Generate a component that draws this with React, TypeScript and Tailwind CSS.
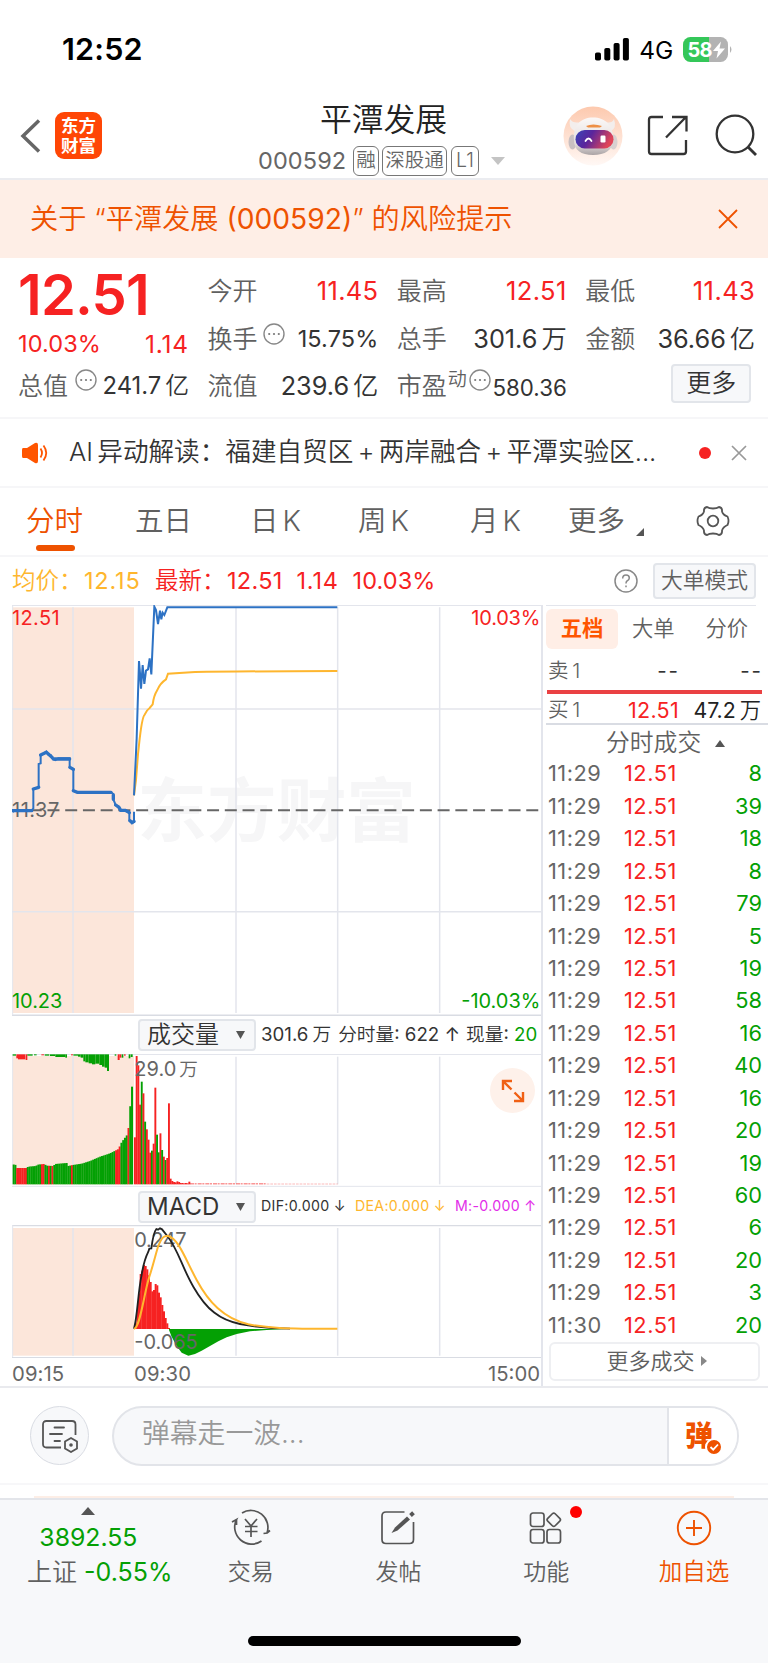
import type { ReactNode } from "react";
import clsx from "clsx";

type Bar = { x: number; y: number; color: string };

const RED = "#f62222";
const GREEN = "#04a004";
const GRID = "#e3e5ec";

const trades: [string, string, number][] = [
  ["11:29", "12.51", 8],
  ["11:29", "12.51", 39],
  ["11:29", "12.51", 18],
  ["11:29", "12.51", 8],
  ["11:29", "12.51", 79],
  ["11:29", "12.51", 5],
  ["11:29", "12.51", 19],
  ["11:29", "12.51", 58],
  ["11:29", "12.51", 16],
  ["11:29", "12.51", 40],
  ["11:29", "12.51", 16],
  ["11:29", "12.51", 20],
  ["11:29", "12.51", 19],
  ["11:29", "12.51", 60],
  ["11:29", "12.51", 6],
  ["11:29", "12.51", 20],
  ["11:29", "12.51", 3],
  ["11:30", "12.51", 20],
];

// linear interpolation over a list of [x, y] stops
function sample(stops: number[][], x: number) {
  for (let i = 1; i < stops.length; i++) {
    const [x0, y0] = stops[i - 1];
    const [x1, y1] = stops[i];
    if (x <= x1) return y0 + ((y1 - y0) * (x - x0)) / (x1 - x0);
  }
  return stops[stops.length - 1][1];
}

// pre-market matched volume, sampled every 5.3 units
const matchedStops = [
  [38, 493], [48, 495], [50, 504], [80, 504], [84, 500], [108, 498], [112, 494], [132, 492],
  [140, 497], [160, 498], [165, 492], [200, 489], [204, 498], [218, 495], [245, 491], [270, 483],
  [300, 470], [330, 460], [355, 447], [365, 426], [380, 406], [384, 388], [389, 370], [392, 260], [400, 260],
];
const matchedReds = [[49, 80], [124, 131], [146, 150], [155, 160], [213, 218], [347, 363], [382, 386]];
const matched: Bar[] = Array.from({ length: 68 }, (_, i) => {
  const x = 38 + i * 5.3;
  const mid = x + 2.6;
  const red = matchedReds.some(([a, b]) => mid >= a && mid <= b);
  return { x, y: sample(matchedStops, mid), color: red ? RED : GREEN };
});

const unmatched: [number, number, number, string][] = [
  [38, 10, 4, GREEN], [49, 5, 12, RED], [54, 22, 15, RED], [77, 5, 17, RED], [82, 16, 4, GREEN],
  [102, 8, 3, GREEN], [124, 8, 3, RED], [134, 14, 4, GREEN], [150, 16, 5, GREEN], [166, 30, 8, GREEN],
  [196, 5, 10, GREEN], [213, 6, 3, RED], [220, 14, 4, GREEN], [234, 8, 7, GREEN], [242, 8, 10, GREEN],
  [250, 6, 21, GREEN], [256, 10, 24, GREEN], [266, 10, 27, GREEN], [276, 10, 30, GREEN], [286, 12, 28, GREEN],
  [298, 8, 32, GREEN], [306, 8, 37, GREEN], [314, 7, 40, GREEN], [321, 6, 50, GREEN],
  [344, 5, 4, GREEN], [353, 6, 17, RED], [359, 5, 10, RED], [365, 5, 10, GREEN], [372, 5, 4, RED],
  [386, 5, 12, GREEN], [392, 6, 8, GREEN],
];

const minuteVolume: [number, string][] = [
  [412, RED], [168, RED], [196, RED], [314, RED], [245, GREEN], [280, RED], [365, GREEN], [388, RED],
  [419, RED], [458, RED], [452, GREEN], [431, RED], [263, RED], [404, GREEN], [457, GREEN], [400, RED],
  [450, GREEN], [470, RED], [480, GREEN], [474, RED], [310, RED], [536, RED], [543, RED], [546, RED],
  [547, RED], [544, RED], [546, RED], [549, RED], [549, RED], [550, RED], [549, RED], [550, RED], [545, RED],
];

const macdUp = [
  [404, 970], [409, 930], [414, 880], [419, 822], [424, 812], [429, 795], [434, 798], [439, 808], [444, 826],
  [449, 846], [454, 874], [459, 870], [464, 852], [469, 856], [474, 878], [479, 892], [484, 915], [489, 934],
  [494, 954], [499, 970], [504, 984],
];
const macdDown = [
  [507, 990], [515, 1010], [530, 1038], [545, 1058], [565, 1067], [585, 1062], [605, 1052], [630, 1038],
  [655, 1024], [680, 1012], [710, 1002], [750, 994], [800, 990], [860, 987],
];

const pricePath =
  "M402 946 L410 775 L417 543 L420 580 L423 626 L428 555 L433 612 L438 572 L444 568 L449 535 L454 583 L463 380 L468 390 L474 432 L480 392 L484 418 L488 398 L493 405 L502 382 L1012 382";
const avgPath =
  "M402 946 L408 900 L414 822 C420 770 424 712 434 704 Q440 690 449 684 L458 673 C461 650 463 644 472 630 Q480 610 498 598 L504 581 L585 576 Q700 574 1012 573";
const preMarketPath =
  "M38 996 L45 991 H95 L100 985 V927 L116 922 V852 L122 850 V825 L132 820 L139 815 L146 825 H152 L156 835 L166 840 L175 835 H209 V862 L220 867 V932 L232 937 H333 L340 942 V958 L347 975 L357 980 L360 990 H375 L388 998 V1022 L396 1028 L402 1026 V995";

function Label({ children, className }: { children: ReactNode; className?: string }) {
  return <span className={clsx("text-[25px] font-[350] text-[#606060]", className)}>{children}</span>;
}

function Amount({ value, unit, className }: { value: string; unit: string; className?: string }) {
  return (
    <span className={clsx("whitespace-nowrap", className)}>
      {value}
      <span className="ml-[4px] font-[350]">{unit}</span>
    </span>
  );
}

function MoreDots({ className }: { className?: string }) {
  return (
    <svg className={clsx("h-[22px] w-[22px] shrink-0", className)} viewBox="0 0 22 22">
      <circle cx="11" cy="11" r="10" fill="none" stroke="#888" strokeWidth="1.4" />
      <circle cx="6.2" cy="11" r="1.1" fill="#777" />
      <circle cx="11" cy="11" r="1.1" fill="#777" />
      <circle cx="15.8" cy="11" r="1.1" fill="#777" />
    </svg>
  );
}

function StatusBar() {
  return (
    <div className="flex h-[100px] items-center pl-[62px] pr-[35px]">
      <span className="pb-[2px] text-[30.500px] font-semibold tracking-[0.2px] text-black">12:52</span>
      <svg className="ml-auto h-[24px] w-[35px]" viewBox="0 0 35 24">
        <rect x="0" y="14.500" width="6" height="8" rx="1.8" />
        <rect x="9.3" y="10" width="6" height="12.500" rx="1.8" />
        <rect x="18.600" y="5" width="6" height="17.500" rx="1.8" />
        <rect x="27.900" y="0" width="6" height="22.500" rx="1.8" />
      </svg>
      <span className="ml-[9px] text-[24.500px] tracking-[-0.2px] text-black">4G</span>
      <svg className="ml-[10px] h-[26px] w-[50px]" viewBox="0 0 50 26">
        <defs>
          <clipPath id="battery">
            <rect width="45" height="25" rx="7.500" />
          </clipPath>
        </defs>
        <g clipPath="url(#battery)">
          <rect width="26" height="25" fill="#34c759" />
          <rect x="26" width="20" height="25" fill="#b3b3b3" />
        </g>
        <path d="M47 9 q3 3.500 0 7z" fill="#b3b3b3" />
        <text x="4.500" y="19.500" fontSize="20" fontWeight="700" fill="#fff" textLength="25">58</text>
        <path d="M38 4.500 L30 14 H35 L33.500 21.500 L42 11.500 H36.500z" fill="#fff" />
      </svg>
    </div>
  );
}

function Robot() {
  return (
    <svg className="h-[60px] w-[60px]" viewBox="0 0 60 60">
      <defs>
        <linearGradient id="halo" x1="0" y1="0" x2="0" y2="1">
          <stop offset="0" stopColor="#fdc9ae" />
          <stop offset="1" stopColor="#fff8f5" />
        </linearGradient>
        <linearGradient id="visor" x1="0" y1="0" x2="1" y2="0.300">
          <stop offset="0" stopColor="#3a45b8" />
          <stop offset="0.450" stopColor="#5a259c" />
          <stop offset="1" stopColor="#e04458" />
        </linearGradient>
        <linearGradient id="shell" x1="0" y1="0" x2="0" y2="1">
          <stop offset="0" stopColor="#fbf8f7" />
          <stop offset="0.700" stopColor="#e4dedd" />
          <stop offset="1" stopColor="#aaa3a5" />
        </linearGradient>
      </defs>
      <circle cx="30" cy="30" r="29.500" fill="url(#halo)" />
      <path d="M7 13 Q5 22 12 25 L18 16 Q10 18 7 13z M51 13 Q54 22 48 25 L42 16 Q49 18 51 13z" fill="#f3eeec" />
      <ellipse cx="9.500" cy="36" rx="4" ry="7.500" fill="#c9c0c1" />
      <ellipse cx="50.500" cy="36" rx="4" ry="7.500" fill="#d8d0d0" />
      <path d="M11 34 C10 19 18 11.500 30 11.500 C42 11.500 51 19 50 34 C50 44 42 49 30 49 C18 49 11 44 11 34z" fill="url(#shell)" />
      <path d="M23 20 Q30 17 39 20 L37 21.500 H25z" fill="#ee8f45" />
      <rect x="12.500" y="24" width="38" height="18.500" rx="9.200" fill="url(#visor)" />
      <path d="M22.500 35 Q25.500 30 28.500 35" fill="none" stroke="#fff" strokeWidth="1.800" strokeLinecap="round" />
      <rect x="37.500" y="29.500" width="5" height="7" rx="1.200" fill="#fff" />
    </svg>
  );
}

function Tag({ children, className }: { children: ReactNode; className?: string }) {
  return (
    <span
      className={clsx(
        "flex h-[30px] shrink-0 items-center justify-center whitespace-nowrap rounded-[6px] border border-[#777] text-[19.500px] font-[350] text-[#666]",
        className,
      )}
    >
      {children}
    </span>
  );
}

function Header() {
  return (
    <header className="flex h-[80px] items-start border-b-2 border-[#ebecf0]">
      <div className="flex w-[258px] shrink-0 items-center pl-[20px] pt-[12px]">
        <svg className="h-[36px] w-[22px]" viewBox="0 0 22 36">
          <path d="M19 2.500 L3 18 L19 33.500" fill="none" stroke="#666" strokeWidth="3.500" />
        </svg>
        <div className="ml-[13px] flex h-[47px] w-[47px] flex-col items-center justify-center rounded-[9px] bg-[#ff4605] text-[17.500px] font-bold leading-[19.500px] text-white">
          <span>东方</span>
          <span>财富</span>
        </div>
      </div>
      <div className="flex w-[251px] shrink-0 flex-col items-center">
        <h1 className="flex h-[39px] items-center text-[31.800px] font-[350] text-[#222]">平潭发展</h1>
        <div className="mt-[7px] flex h-[30px] w-full items-center">
          <span className="w-[95px] text-[23.500px] tracking-[0.1px] text-[#666]">000592</span>
          <Tag className="w-[26px]">融</Tag>
          <Tag className="ml-[3px] w-[65px]">深股通</Tag>
          <Tag className="ml-[4px] w-[28px]">L1</Tag>
          <svg className="ml-[12px] h-[8px] w-[14px] shrink-0" viewBox="0 0 14 8">
            <path d="M0 0 H14 L7 8z" fill="#c4c4c4" />
          </svg>
        </div>
      </div>
      <div className="ml-[54px] flex items-center pt-[6px]">
        <Robot />
        <svg className="ml-[24px] h-[42px] w-[42px]" viewBox="0 0 42 42" fill="none" stroke="#333" strokeWidth="2.300">
          <path d="M16 2 H4.500 Q2 2 2 4.500 V36.500 Q2 39 4.500 39 H36.500 Q39 39 39 36.500 V25" />
          <path d="M25 2 H39.500 V16.500 M39 2 L19 22.500" />
        </svg>
        <svg className="ml-[25px] h-[44px] w-[44px]" viewBox="0 0 44 44" fill="none" stroke="#333" strokeWidth="2.300">
          <circle cx="21" cy="20" r="18.300" />
          <path d="M34 33 L42 41" strokeWidth="2.800" />
        </svg>
      </div>
    </header>
  );
}

function Quote() {
  return (
    <section className="grid h-[161px] grid-cols-[171px_171px_170px_170px] grid-rows-[auto] gap-x-[18.400px] border-b-2 border-[#f6f6f8] pl-[18px]">
      <div className="flex flex-col text-[#f62222]">
        <div className="flex h-[60px] items-center pt-[13px] text-[56px] font-semibold tracking-[-0.8px]">12.51</div>
        <div className="mt-[9px] flex h-[34px] items-center justify-between text-[23.500px]">
          <span className="tracking-[0.1px]">10.03%</span>
          <span className="text-[24.500px] tracking-[0.8px]">1.14</span>
        </div>
        <div className="mt-[7px] flex h-[36px] items-center text-[#333]">
          <Label>总值</Label>
          <MoreDots className="-mt-[12px] ml-[7px]" />
          <Amount className="ml-auto text-[23.800px]" value="241.7" unit="亿" />
        </div>
      </div>
      <div className="flex flex-col pt-[15px] text-[#333]">
        <div className="flex h-[36px] items-center justify-between">
          <Label>今开</Label>
          <span className="text-[25.500px] tracking-[0.3px] text-[#f62222]">11.45</span>
        </div>
        <div className="mt-[12px] flex h-[36px] items-center">
          <Label>换手</Label>
          <MoreDots className="-mt-[11px] ml-[6px]" />
          <span className="ml-auto text-[23.500px] tracking-[0.1px]">15.75%</span>
        </div>
        <div className="mt-[11px] flex h-[36px] items-center justify-between">
          <Label>流值</Label>
          <Amount className="text-[25.300px]" value="239.6" unit="亿" />
        </div>
      </div>
      <div className="flex flex-col pt-[15px] text-[#333]">
        <div className="flex h-[36px] items-center justify-between">
          <Label>最高</Label>
          <span className="text-[25.500px] tracking-[0.4px] text-[#f62222]">12.51</span>
        </div>
        <div className="mt-[12px] flex h-[36px] items-center justify-between">
          <Label>总手</Label>
          <Amount className="text-[25.300px]" value="301.6" unit="万" />
        </div>
        <div className="mt-[11px] flex h-[36px] items-center">
          <Label>市盈</Label>
          <Label className="-mt-[14px] ml-[1px] !text-[19px]">动</Label>
          <MoreDots className="-mt-[12px] ml-[2px]" />
          <span className="ml-auto pt-[4px] text-[22.300px]">580.36</span>
        </div>
      </div>
      <div className="flex flex-col pt-[15px] text-[#333]">
        <div className="flex h-[36px] items-center justify-between">
          <Label>最低</Label>
          <span className="text-[25.500px] tracking-[0.4px] text-[#f62222]">11.43</span>
        </div>
        <div className="mt-[12px] flex h-[36px] items-center justify-between">
          <Label>金额</Label>
          <Amount className="text-[25.300px]" value="36.66" unit="亿" />
        </div>
        <button className="ml-auto mr-[4px] mt-[7px] flex h-[39px] w-[80px] items-center justify-center rounded-[4px] border-2 border-[#e2e5ea] bg-[#f7f8fa] text-[25px] font-[350]">
          更多
        </button>
      </div>
    </section>
  );
}

function AiNotice() {
  return (
    <div className="flex h-[69px] items-center border-b-2 border-[#f6f6f8] pl-[22px] text-[#333]">
      <svg className="h-[22px] w-[26px]" viewBox="0 0 26 22">
        <path d="M1 6 H5 L13 1 Q16 0 16 3 V19 Q16 22 13 21 L5 16 H1 Q0 16 0 14 V8 Q0 6 1 6z" fill="#ff5500" />
        <path d="M18.500 6.500 Q21.500 11 18.500 15.500 M21.500 3.500 Q27 11 21.500 18.500" fill="none" stroke="#ff5500" strokeWidth="1.800" />
      </svg>
      <span className="ml-[21px] w-[601px] whitespace-nowrap pb-[1px] text-[25.600px] font-[350] [word-spacing:-2.800px]">
        AI 异动解读：福建自贸区 + 两岸融合 + 平潭实验区...
      </span>
      <span className="ml-[29px] h-[12px] w-[12px] rounded-full bg-[#f62222]" />
      <svg className="ml-[20px] h-[16px] w-[16px]" viewBox="0 0 16 16">
        <path d="M1 1 L15 15 M15 1 L1 15" stroke="#999" strokeWidth="1.700" />
      </svg>
    </div>
  );
}

function PeriodTabs() {
  return (
    <nav className="flex h-[69px] items-center border-b-2 border-[#f6f6f8] pl-[26px] text-[28.500px] font-[350] text-[#606060] [word-spacing:-4px]">
      <div className="relative w-[109px] text-[#ee5200]">
        <span>分时</span>
        <span className="absolute -bottom-[15px] left-[10px] h-[6px] w-[39px] rounded-full bg-[#ee5200]" />
      </div>
      <span className="w-[115px]">五日</span>
      <span className="w-[108px] whitespace-nowrap">日 K</span>
      <span className="w-[112px] whitespace-nowrap">周 K</span>
      <span className="w-[98px] whitespace-nowrap">月 K</span>
      <span>更多</span>
      <svg className="ml-[11px] mt-[20px] h-[8px] w-[8px]" viewBox="0 0 8 8">
        <path d="M8 0 V8 H0z" fill="#555" />
      </svg>
      <svg className="-mt-[2px] ml-[52px] h-[34px] w-[34px]" viewBox="0 0 34 34" fill="none" stroke="#555" strokeWidth="1.800">
        <circle cx="17" cy="17" r="5.300" />
        <path
          strokeLinejoin="round"
          d="M8 7.500 Q7.500 3.500 11 3 Q13 4.500 17 4.500 Q21 4.500 23 3 Q26.500 3.500 26 7.500 Q27 11 31.500 12.500 Q33.500 17 31.500 21 Q27 23 26 26.500 Q26.500 30.500 23 31 Q21 29.500 17 29.500 Q13 29.500 11 31 Q7.500 30.500 8 26.500 Q7 23 2.500 21 Q0.500 17 2.500 12.500 Q7 11 8 7.500z"
        />
      </svg>
    </nav>
  );
}

function PriceLegend() {
  return (
    <div className="flex h-[48px] items-center whitespace-nowrap pl-[12px] text-[23.500px] tracking-[0.3px] text-[#f62222]">
      <span className="w-[72px] font-[350] tracking-normal text-[#feb62e]">均价：</span>
      <span className="w-[71px] tracking-[0.8px] text-[#feb62e]">12.15</span>
      <span className="w-[72px] font-[350] tracking-normal">最新：</span>
      <span className="w-[69.500px]">12.51</span>
      <span className="w-[56px] tracking-[0.800px]">1.14</span>
      <span className="tracking-[0.1px]">10.03%</span>
      <svg className="ml-auto h-[24px] w-[24px]" viewBox="0 0 24 24" fill="none" stroke="#888" strokeWidth="1.500">
        <circle cx="12" cy="12" r="11" />
        <path d="M8.700 9.500 Q8.700 6 12 6 Q15.300 6 15.300 9 Q15.300 11 13 12 Q12 12.600 12 14.500 M12 16.500 V18.300" />
      </svg>
      <button className="ml-[15px] mr-[12px] flex h-[36px] w-[103px] items-center justify-center rounded-[4px] border-2 border-[#e2e5ea] bg-[#f7f8fa] text-[21.800px] font-[350] tracking-normal text-[#606060]">
        大单模式
      </button>
    </div>
  );
}

function GridColumns({ y1, y2 }: { y1: number; y2: number }) {
  return (
    <g stroke={GRID} strokeWidth="4.500">
      {[219, 708, 1013, 1319].map((x) => (
        <path key={x} d={`M${x} ${y1} V${y2}`} />
      ))}
    </g>
  );
}

// the three charts below share one x scale: 3 units per pixel, starting at 36
function PriceChart() {
  return (
    <svg className="h-[411px] w-[529px]" viewBox="36 375 1587 1233">
      <rect x="38" y="382" width="364" height="1217" fill="#fce6da" />
      <text x="412" y="1068" fontSize="209" fontWeight="700" fill="#f6f6f7" textLength="836">东方财富</text>
      <GridColumns y1={382} y2={1599} />
      <path d="M36 687 H1626 M36 1295 H1626" stroke={GRID} strokeWidth="4.500" />
      <path d="M36 376.500 H1626" stroke={GRID} strokeWidth="3" />
      <path d="M36 1606 H1626" stroke="#d9dce3" strokeWidth="4.500" />
      <path d="M38 375 V1606" stroke={GRID} strokeWidth="3" />
      <path d="M36 991 H1616" stroke="#666" strokeWidth="6" strokeDasharray="36 17.200" />
      <g fontSize="60">
        <text x="36" y="434" fill={RED} textLength="143">12.51</text>
        <text x="1414" y="434" fill={RED} textLength="207">10.03%</text>
        <text x="36" y="1010" fill="#666" textLength="142">11.37</text>
        <text x="36" y="1585" fill="#04a004" textLength="151">10.23</text>
        <text x="1384" y="1585" fill="#04a004" textLength="237">-10.03%</text>
      </g>
      <path d={preMarketPath} fill="none" stroke="#2d72c4" strokeWidth="6" />
      <path
        d="M38 992 H95 M100 927 L116 922 M122 825 L139 817 L156 832 M160 837 H209 M210 862 L220 868 M220 932 L232 937 H333 M340 945 V958 M347 975 L357 982 L362 991 H376 L388 998 M390 1022 L396 1028 L402 1024"
        fill="none"
        stroke="#2d72c4"
        strokeWidth="10"
        strokeLinecap="round"
      />
      <path d={avgPath} fill="none" stroke="#feb62e" strokeWidth="6" />
      <path d={pricePath} fill="none" stroke="#2d72c4" strokeWidth="6" />
    </svg>
  );
}

function VolumeChart() {
  return (
    <div className="relative h-[133px]">
      <svg className="h-[133px] w-[529px]" viewBox="36 162 1587 399">
        <path d="M36 163.500 H1626" stroke={GRID} strokeWidth="3" />
        <rect x="38" y="168" width="364" height="385" fill="#fce6da" />
        <GridColumns y1={170} y2={553} />
        <path d="M38 162 V553" stroke={GRID} strokeWidth="3" />
        {matched.map((b) => (
          <rect key={b.x} x={b.x} y={b.y} width="6" height={553 - b.y} fill={b.color} />
        ))}
        {unmatched.map(([x, w, h, color]) => (
          <rect key={x} x={x} y="163" width={w} height={h} fill={color} />
        ))}
        {minuteVolume.map(([y, color], i) => (
          <rect key={i} x={402 + i * 5.1} y={y} width="5.700" height={553 - y} fill={color} />
        ))}
        <path d="M570 551.500 H800" stroke={RED} strokeWidth="3" opacity="0.700" strokeDasharray="12 2 6 3" />
        <path d="M800 552 H1013" stroke={RED} strokeWidth="2" opacity="0.450" strokeDasharray="8 3" />
        <text x="403" y="228" fontSize="60" fill="#666">29.0</text>
        <text x="538" y="228" fontSize="56" fontWeight="350" fill="#666">万</text>
        <path d="M36 559 H1626" stroke={GRID} strokeWidth="3" />
      </svg>
      <button className="absolute right-[6px] top-[14px] flex h-[45px] w-[45px] items-center justify-center rounded-full bg-[#fef1ea]">
        <svg className="h-[24px] w-[24px]" viewBox="0 0 24 24" fill="none" stroke="#f06014" strokeWidth="2.400">
          <path d="M2 11 V2 H11 M2 2 L10.500 10.500" />
          <path d="M22 13 V22 H13 M22 22 L13.500 13.500" />
        </svg>
      </button>
    </div>
  );
}

function MacdChart() {
  return (
    <svg className="h-[133px] w-[529px]" viewBox="36 675 1587 399">
      <path d="M36 676.500 H1626" stroke="#d9dce3" strokeWidth="4" />
      <rect x="38" y="684" width="364" height="383" fill="#fce6da" />
      <GridColumns y1={684} y2={1067} />
      <path d="M38 675 V1073" stroke={GRID} strokeWidth="3" />
      {macdUp.map(([x, y]) => (
        <rect key={x} x={x} y={y} width="6" height={987 - y} fill={RED} />
      ))}
      <path d={`M507 987 L${macdDown.map((p) => p.join(" ")).join(" L")} Z`} fill={GREEN} />
      <g fontSize="60" fill="#666">
        <text x="403" y="741" textLength="157">0.247</text>
        <text x="403" y="1048" textLength="190">-0.065</text>
      </g>
      <path
        d="M402 986 C412 950 415 870 424 830 C430 790 435 775 445 755 L448 746 L454 745 C458 715 462 695 469 687 L474 689 L480 685 L486 688 L502 708 C535 750 545 800 580 860 C620 930 660 960 720 972 C780 983 830 986 870 986"
        fill="none"
        stroke="#222"
        strokeWidth="5.500"
      />
      <path
        d="M402 986 C420 985 432 880 448 830 C458 800 465 770 474 740 C485 712 492 706 504 708 C535 715 555 775 590 840 C625 905 670 955 745 973 C800 984 850 986 1012 986.500"
        fill="none"
        stroke="#feb62e"
        strokeWidth="6"
      />
      <path d="M36 1073 H1626" stroke="#d9dce3" strokeWidth="4" />
    </svg>
  );
}

function IndicatorPicker({ children, className }: { children: ReactNode; className?: string }) {
  return (
    <button
      className={clsx(
        "ml-[126px] flex h-[32px] w-[118px] shrink-0 items-center justify-between rounded-[4px] border-2 border-[#e2e5ea] bg-[#f7f8fa] pl-[7px] pr-[9px] text-[24px] tracking-normal text-[#333]",
        className,
      )}
    >
      {children}
      <svg className="h-[8px] w-[9px]" viewBox="0 0 9 8">
        <path d="M0 0 H9 L4.500 8z" fill="#555" />
      </svg>
    </button>
  );
}

function Charts() {
  return (
    <div className="flex w-[529px] shrink-0 flex-col">
      <PriceChart />
      <div className="flex h-[38px] items-center whitespace-nowrap text-[18.700px] text-[#333]">
        <IndicatorPicker className="font-[350]">成交量</IndicatorPicker>
        <Amount className="ml-[5px]" value="301.6" unit="万" />
        <span className="ml-[7px]">
          <span className="font-[350]">分时量</span>: 622 ↑
        </span>
        <span className="ml-[6px]">
          <span className="font-[350]">现量</span>: <span className="text-[#04a004]">20</span>
        </span>
      </div>
      <VolumeChart />
      <div className="flex h-[38px] items-center whitespace-nowrap pt-[1px] text-[14.200px] tracking-[0.300px] text-[#333]">
        <IndicatorPicker className="tracking-[-0.2px]">MACD</IndicatorPicker>
        <span className="ml-[5px] w-[94px]">DIF:0.000 ↓</span>
        <span className="w-[100px] text-[#feb62e]">DEA:0.000 ↓</span>
        <span className="text-[#e22ee8]">M:-0.000 ↑</span>
      </div>
      <MacdChart />
      <div className="flex h-[28px] items-center pt-[4px] text-[20.300px] text-[#666]">
        <span className="w-[122px] tracking-[0.1px]">09:15</span>
        <span className="tracking-[0.1px]">09:30</span>
        <span className="ml-auto mr-[1px]">15:00</span>
      </div>
    </div>
  );
}

function OrderBook() {
  return (
    <aside className="flex w-[227px] flex-col border-l-2 border-[#e3e5ec] pl-[3px]">
      <div className="mr-[12px] h-[4px] shrink-0 border-t border-[#e3e5ec]" />
      <div className="flex h-[40px] items-center text-[21.300px] font-[350] text-[#606060]">
        <span className="flex h-[40px] w-[72px] items-center justify-center rounded-[6px] bg-[#ffeee6] font-bold text-[#ff5500]">
          五档
        </span>
        <span className="ml-[14px]">大单</span>
        <span className="ml-auto mr-[20px]">分价</span>
      </div>
      <div className="mt-[5px] flex h-[36px] items-center pb-[1px] pl-[2px] pr-[5px] text-[20.500px] text-[#333]">
        <span className="font-[350] text-[#606060] [word-spacing:-2px]">卖 1</span>
        <span className="ml-auto tracking-[2px]">--</span>
        <span className="w-[83px] text-right tracking-[2px]">--</span>
      </div>
      <div className="ml-[1px] h-[4px] w-[215px] shrink-0 bg-[#ea4143]" />
      <div className="flex h-[31px] shrink-0 items-center whitespace-nowrap border-b-2 border-[#d9dce3] pl-[2px] pr-[7px] pt-[4px] text-[21.500px]">
        <span className="text-[20.500px] font-[350] text-[#606060] [word-spacing:-2px]">买 1</span>
        <span className="ml-auto tracking-[0.300px] text-[#f62222]">12.51</span>
        <Amount className="w-[82px] text-right text-[21.300px] text-[#222]" value="47.2" unit="万" />
      </div>
      <div className="flex h-[33px] shrink-0 items-center pl-[60px] pt-[3px] text-[23.800px] font-[350] text-[#606060]">
        分时成交
        <svg className="ml-[14px] h-[7px] w-[10px]" viewBox="0 0 10 7">
          <path d="M0 7 H10 L5 0z" fill="#555" />
        </svg>
      </div>
      <div className="flex flex-col">
        {trades.map(([time, price, size], i) => (
          <div key={i} className="flex h-[32.450px] items-center pl-[2px] pr-[6px] text-[21.800px]">
            <span className="w-[76px] tracking-[0.500px] text-[#666]">{time}</span>
            <span className="tracking-[0.500px] text-[#f62222]">{price}</span>
            <span className="ml-auto text-[#04a004]">{size}</span>
          </div>
        ))}
      </div>
      <button className="ml-[3px] flex h-[39px] w-[211px] shrink-0 items-center justify-center gap-[6px] rounded-[6px] border-2 border-[#eeeff2] pb-[1px] pl-[4px] text-[22px] font-[350] text-[#606060]">
        更多成交
        <svg className="h-[10px] w-[6px]" viewBox="0 0 6 10">
          <path d="M0 0 V10 L6 5z" fill="#888" />
        </svg>
      </button>
    </aside>
  );
}

function CommentBar() {
  return (
    <div className="flex h-[99px] items-center border-b-2 border-t-2 border-b-[#f7f7f9] border-t-[#e9eaee] pl-[30px]">
      <div className="flex h-[59px] w-[59px] items-center justify-center rounded-full border border-[#d9dce3] bg-[#f7f8fa]">
        <svg className="h-[34px] w-[38px]" viewBox="0 0 38 34" fill="none" stroke="#555" strokeWidth="1.800">
          <path d="M20 28.500 H5.500 Q2 28.500 2 25 V5.500 Q2 2 5.500 2 H31 Q34.500 2 34.500 5.500 V16" />
          <path d="M13.500 8.500 H23 M9 15 H21 M13.500 22 H19" strokeLinecap="round" />
          <path d="M30 19 L36 22.500 V29.500 L30 33 L24 29.500 V22.500z" />
          <circle cx="30" cy="26" r="1.800" fill="#555" stroke="none" />
        </svg>
      </div>
      <div className="ml-[23px] flex h-[60px] w-[627px] overflow-hidden rounded-full border-2 border-[#e2e4e9] bg-[#f7f8fa]">
        <span className="flex h-full w-[553px] items-center pb-[4px] pl-[28px] text-[27.800px] font-[350] text-[#999]">
          弹幕走一波...
        </span>
        <div className="relative flex flex-1 items-center border-l-2 border-[#e2e4e9] bg-white pl-[16px]">
          <span className="text-[28px] font-black leading-none text-[#ee5200]">弹</span>
          <svg className="absolute left-[36px] top-[30px] h-[18px] w-[18px]" viewBox="0 0 18 18">
            <circle cx="9" cy="9" r="8" fill="#ee5200" stroke="#fff" strokeWidth="2" />
            <path d="M5.500 9 L8.200 11.700 L13 6.500" fill="none" stroke="#fff" strokeWidth="1.800" />
          </svg>
        </div>
      </div>
    </div>
  );
}

function NavItem({ icon, children, className }: { icon: ReactNode; children: ReactNode; className?: string }) {
  return (
    <div className={clsx("flex w-[148px] flex-col items-center text-[23px] font-[350] text-[#606060]", className)}>
      <div className="flex h-[56px] items-center">{icon}</div>
      <span className="mt-[2px] flex h-[28px] items-center">{children}</span>
    </div>
  );
}

function BottomNav() {
  const icon = "h-[40px] w-[40px]";
  return (
    <footer className="flex h-[165px] flex-col border-t-2 border-[#e3e5ea] bg-[#f7f8fa]">
      <div className="flex">
        <div className="flex w-[177px] flex-col items-center whitespace-nowrap">
          <svg className="mt-[7px] h-[8px] w-[14px]" viewBox="0 0 14 8">
            <path d="M0 8 H14 L7 0z" fill="#555" />
          </svg>
          <span className="mt-[6px] flex h-[32px] items-center text-[24.800px] text-[#04a004]">3892.55</span>
          <span className="flex h-[38px] w-full items-center pl-[27px] text-[25px] font-[350] text-[#606060]">
            上证<span className="ml-[7px] font-normal text-[#04a004]">-0.55%</span>
          </span>
        </div>
        <NavItem
          icon={
            <svg className={icon} viewBox="0 0 40 40" fill="none" stroke="#555" strokeWidth="1.700">
              <path d="M11 5 A17 17 0 0 1 36 25 L32.500 25.500 M36 25 L39 22.500" />
              <path d="M30.500 33 A17 17 0 0 1 5.500 11.500 L1 14 M5.500 11.500 V17" />
              <path d="M14 11 L20 18 L26 11 M20 18 V29 M14 18.500 H26.500 M14 23.500 H26.500" />
            </svg>
          }
        >
          交易
        </NavItem>
        <NavItem
          icon={
            <svg className={icon} viewBox="0 0 40 40" fill="none" stroke="#555" strokeWidth="1.700">
              <path d="M26.500 4 H8 Q4 4 4 8 V31.500 Q4 35.500 8 35.500 H31.500 Q35.500 35.500 35.500 31.500 V14" />
              <path d="M13.500 25 L17 19.500 L29 8.500 L32 11.500 L19.500 22.500z" fill="#555" stroke="none" />
              <path d="M32.500 7.500 L35.500 4.800" strokeWidth="4" />
            </svg>
          }
        >
          发帖
        </NavItem>
        <NavItem
          className="relative"
          icon={
            <>
              <svg className={icon} viewBox="0 0 40 40" fill="none" stroke="#555" strokeWidth="1.700">
                <rect x="4.500" y="5" width="13.500" height="13.500" rx="2.500" />
                <rect x="4.500" y="21.500" width="13.500" height="13.500" rx="2.500" />
                <rect x="21" y="21.500" width="13.500" height="13.500" rx="2.500" />
                <rect x="22.500" y="6.500" width="10.500" height="10.500" rx="2" transform="rotate(45 27.750 11.750)" />
              </svg>
              <span className="absolute left-[98px] top-[6px] h-[12px] w-[12px] rounded-full bg-[#ff0000]" />
            </>
          }
        >
          功能
        </NavItem>
        <NavItem
          className="!text-[#ee5200]"
          icon={
            <svg className={icon} viewBox="0 0 40 40" fill="none" stroke="#ee5200" strokeWidth="1.900">
              <circle cx="20" cy="20" r="16.200" />
              <path d="M20 12 V28 M12 20 H28" />
            </svg>
          }
        >
          <span className="text-[23.500px]">加自选</span>
        </NavItem>
      </div>
      <div className="mx-auto mb-[17px] mt-auto h-[10px] w-[273px] rounded-full bg-black" />
    </footer>
  );
}

export default function App() {
  return (
    <div className="flex h-[1663px] w-[768px] flex-col overflow-hidden bg-white font-[Inter,'Noto_Sans_CJK_SC',sans-serif] leading-none">
      <StatusBar />
      <Header />
      <div className="flex h-[78px] items-center bg-[#feeee6] pl-[30px] pr-[30px] text-[28.200px] font-[350] text-[#ee5200]">
        <span className="whitespace-nowrap">
          关于 “平潭发展 <span className="font-normal">(000592)</span>” 的风险提示
        </span>
        <svg className="ml-auto h-[20px] w-[20px]" viewBox="0 0 20 20">
          <path d="M1 1 L19 19 M19 1 L1 19" stroke="#ee5200" strokeWidth="1.800" />
        </svg>
      </div>
      <Quote />
      <AiNotice />
      <PeriodTabs />
      <PriceLegend />
      <main className="flex h-[781px] pl-[12px]">
        <Charts />
        <OrderBook />
      </main>
      <CommentBar />
      <div className="h-[13px] shrink-0 px-[34px] pt-[11px]">
        <div className="h-[2px] bg-[#fdeee6]" />
      </div>
      <BottomNav />
    </div>
  );
}
